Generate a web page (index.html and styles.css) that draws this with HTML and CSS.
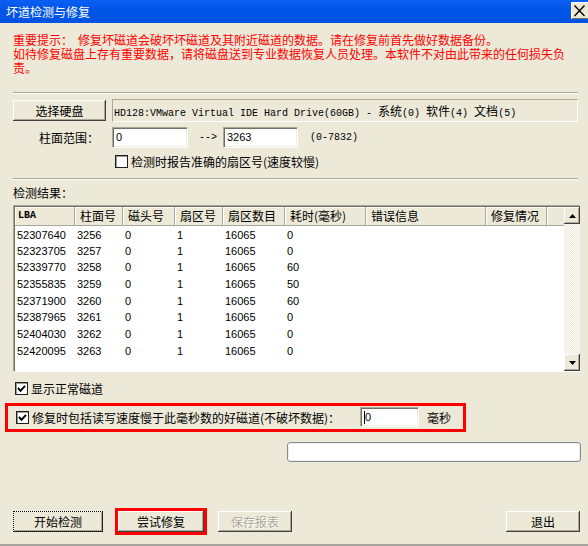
FILE: index.html
```html
<!DOCTYPE html>
<html lang="zh-CN">
<head>
<meta charset="utf-8">
<title>坏道检测与修复</title>
<link rel="stylesheet" href="styles.css">
</head>
<body>
<div class="win">
  <div class="titlebar">
    <span class="title">坏道检测与修复</span>
    <div class="close"><svg width="17" height="17" viewBox="0 0 17 17"><path d="M3.5 3.5 L13.5 14 M13.5 3.5 L3.5 14" stroke="#000" stroke-width="1.4" fill="none"/></svg></div>
  </div>
  <div class="content">
    <p class="warn">重要提示：<span class="sp"></span>修复坏磁道会破坏坏磁道及其附近磁道的数据。请在修复前首先做好数据备份。<br>如待修复磁盘上存有重要数据，请将磁盘送到专业数据恢复人员处理。本软件不对由此带来的任何损失负责。</p>
    <div class="sep sep1"></div>

    <div class="row r1">
      <button class="btn btn-disk">选择硬盘</button>
      <div class="diskfield">HD128:VMware Virtual IDE Hard Drive(60GB) - <span class="cj">系统</span>(0) <span class="cj">软件</span>(4) <span class="cj">文档</span>(5)</div>
    </div>

    <div class="row r2">
      <span class="lbl">柱面范围：</span>
      <div class="edit e1">0</div>
      <span class="arrow">--&gt;</span>
      <div class="edit e2">3263</div>
      <span class="range">(0-7832)</span>
    </div>

    <div class="row r3">
      <span class="chk"></span>
      <span class="chklbl">检测时报告准确的扇区号(速度较慢)</span>
    </div>

    <div class="sep sep2"></div>

    <div class="reslbl">检测结果：</div>

    <div class="list">
      <div class="lvmain">
        <div class="lvrow lvhead">
          <div class="hc hc-lba">LBA</div>
          <div class="hc">柱面号</div>
          <div class="hc">磁头号</div>
          <div class="hc">扇区号</div>
          <div class="hc">扇区数目</div>
          <div class="hc">耗时(毫秒)</div>
          <div class="hc">错误信息</div>
          <div class="hc">修复情况</div>
          <div class="hc hc-fill"></div>
        </div>
        <div class="lvrow"><div class="dc">52307640</div><div class="dc">3256</div><div class="dc">0</div><div class="dc">1</div><div class="dc">16065</div><div class="dc">0</div><div class="dc"></div><div class="dc"></div></div>
        <div class="lvrow"><div class="dc">52323705</div><div class="dc">3257</div><div class="dc">0</div><div class="dc">1</div><div class="dc">16065</div><div class="dc">0</div><div class="dc"></div><div class="dc"></div></div>
        <div class="lvrow"><div class="dc">52339770</div><div class="dc">3258</div><div class="dc">0</div><div class="dc">1</div><div class="dc">16065</div><div class="dc">60</div><div class="dc"></div><div class="dc"></div></div>
        <div class="lvrow"><div class="dc">52355835</div><div class="dc">3259</div><div class="dc">0</div><div class="dc">1</div><div class="dc">16065</div><div class="dc">50</div><div class="dc"></div><div class="dc"></div></div>
        <div class="lvrow"><div class="dc">52371900</div><div class="dc">3260</div><div class="dc">0</div><div class="dc">1</div><div class="dc">16065</div><div class="dc">60</div><div class="dc"></div><div class="dc"></div></div>
        <div class="lvrow"><div class="dc">52387965</div><div class="dc">3261</div><div class="dc">0</div><div class="dc">1</div><div class="dc">16065</div><div class="dc">0</div><div class="dc"></div><div class="dc"></div></div>
        <div class="lvrow"><div class="dc">52404030</div><div class="dc">3262</div><div class="dc">0</div><div class="dc">1</div><div class="dc">16065</div><div class="dc">0</div><div class="dc"></div><div class="dc"></div></div>
        <div class="lvrow"><div class="dc">52420095</div><div class="dc">3263</div><div class="dc">0</div><div class="dc">1</div><div class="dc">16065</div><div class="dc">0</div><div class="dc"></div><div class="dc"></div></div>
      </div>
      <div class="vscroll">
        <div class="sbtn"><svg width="7" height="4" viewBox="0 0 7 4"><path d="M3.5 0 L7 4 L0 4 Z" fill="#000"/></svg></div>
        <div class="strack"></div>
        <div class="sbtn"><svg width="7" height="4" viewBox="0 0 7 4"><path d="M0 0 L7 0 L3.5 4 Z" fill="#000"/></svg></div>
      </div>
    </div>

    <div class="row r4">
      <span class="chk checked"><svg width="11" height="11" viewBox="0 0 11 11"><path d="M2 5 L4.5 7.8 L9 2.8" stroke="#000" stroke-width="2" fill="none"/></svg></span>
      <span class="chklbl">显示正常磁道</span>
    </div>

    <div class="row redbox">
      <span class="chk checked"><svg width="11" height="11" viewBox="0 0 11 11"><path d="M2 5 L4.5 7.8 L9 2.8" stroke="#000" stroke-width="2" fill="none"/></svg></span>
      <span class="chklbl rlabel">修复时包括读写速度慢于此毫秒数的好磁道(不破坏数据)：</span>
      <div class="edit e3"><span class="caret"></span>0</div>
      <span class="unit">毫秒</span>
    </div>

    <div class="progress"></div>

    <div class="row btnrow">
      <button class="btn btn-start">开始检测</button>
      <div class="redwrap"><button class="btn btn-try">尝试修复</button></div>
      <button class="btn btn-save" disabled>保存报表</button>
      <button class="btn btn-exit">退出</button>
    </div>
  </div>
</div>
</body>
</html>
```

FILE: styles.css
```css
* { box-sizing: border-box; margin: 0; padding: 0; }
html, body { width: 588px; height: 546px; overflow: hidden; }
body {
  background: #ECE9D8;
  font-family: "Noto Sans CJK SC", "Liberation Sans", sans-serif;
  font-size: 12px;
  color: #000;
}
.win {
  width: 588px;
  height: 546px;
  display: flex;
  flex-direction: column;
  border-bottom: 2px solid #A5A39B;
}
.titlebar {
  height: 23px;
  flex: none;
  background: linear-gradient(#0860F2, #0155E6 40%, #0053E2);
  display: flex;
  justify-content: space-between;
  align-items: flex-start;
}
.title {
  color: #fff;
  line-height: 23px;
  padding-left: 6px;
}
.close {
  width: 17px;
  height: 17px;
  margin-top: 2px;
  background: #ECE9D8;
  box-shadow: inset 1px 1px 0 #fff, inset 0 -1px 0 #716F64;
}
.close svg { display: block; }

.content {
  flex: 1;
  display: flex;
  flex-direction: column;
  padding: 0 8px 0 13px;
}
.warn {
  margin-top: 11px;
  color: #f00;
  font-family: "Liberation Sans", "Noto Sans CJK SC", sans-serif;
  line-height: 14px;
}
.sp { display: inline-block; width: 5px; }
.sep {
  height: 2px;
  border-top: 1px solid #ACA899;
  border-bottom: 1px solid #fff;
  margin-right: 2px;
}
.sep1 { margin-top: 16px; }
.sep2 { margin-top: 9px; }

.row { display: flex; align-items: center; }

.btn {
  font-family: "Noto Sans CJK SC", sans-serif;
  font-size: 12px;
  color: #000;
  background: #ECE9D8;
  border: none;
  height: 21px;
  line-height: 19px;
  box-shadow: inset -1px -1px 0 #404040, inset 1px 1px 0 #fff, inset -2px -2px 0 #ACA899;
}

.r1 { margin-top: 5px; height: 23px; }
.btn-disk { width: 93px; }
.diskfield {
  flex: 1;
  height: 23px;
  margin-left: 6px;
  margin-right: 2px;
  border: 1px solid;
  border-color: #ACA899 #fff #fff #ACA899;
  padding-left: 1px;
  font-family: "Liberation Mono", monospace;
  font-size: 10px;
  line-height: 21px;
  white-space: nowrap;
}
.cj { font-family: "Noto Sans CJK SC", sans-serif; font-size: 12px; }

.r2 { margin-top: 5px; height: 21px; }
.lbl { padding-left: 26px; width: 99px; }
.edit {
  height: 21px;
  background: #fff;
  border: 1px solid;
  border-color: #ACA899 #fff #fff #ACA899;
  box-shadow: inset 1px 1px 0 #716F64, inset -1px -1px 0 #F1EFE2;
  font-family: "Liberation Sans", sans-serif;
  font-size: 11px;
  line-height: 19px;
  padding-left: 3px;
}
.e1 { width: 76px; margin-left: 0; }
.arrow {
  margin-left: 11px;
  width: 18px;
  font-family: "Liberation Mono", monospace;
  font-size: 10px;
}
.e2 { width: 75px; margin-left: 6px; }
.range {
  margin-left: 12px;
  font-family: "Liberation Mono", monospace;
  font-size: 10px;
}

.r3 { margin-top: 6px; height: 15px; padding-left: 102px; }
.chk {
  width: 13px;
  height: 13px;
  flex: none;
  background: #fff;
  border: 1px solid #1E1E1E;
  box-shadow: inset 1px 1px 0 #9A9A9A;
  display: flex;
  align-items: center;
  justify-content: center;
}
.chk svg { display: block; }
.chklbl { margin-left: 3px; line-height: 15px; white-space: nowrap; }

.reslbl { margin-top: 6px; line-height: 14px; }

.list {
  margin-top: 5px;
  height: 167px;
  display: flex;
  background: #fff;
  border-style: solid;
  border-width: 1px 0 1px 1px;
  border-color: #ACA899 #fff #fff #ACA899;
  box-shadow: inset 1px 1px 0 #716F64;
  padding: 1px 0 0 1px;
}
.lvmain { flex: 1; display: flex; flex-direction: column; }
.lvrow {
  display: grid;
  grid-template-columns: 60px 48px 52px 48px 62px 81px 120px 61px 1fr;
}
.lvhead { height: 19px; }
.hc {
  background: #ECE9D8;
  border-right: 1px solid #ACA899;
  border-bottom: 1px solid #ACA899;
  box-shadow: inset 1px 1px 0 #fff;
  padding-left: 5px;
  line-height: 18px;
  white-space: nowrap;
  overflow: hidden;
}
.hc-lba {
  font-family: "Liberation Mono", monospace;
  font-weight: bold;
  font-size: 10px;
  padding-left: 3px;
}
.hc-fill { border-right: none; }
.dc {
  height: 16.7px;
  line-height: 17px;
  padding-left: 2px;
  font-family: "Liberation Sans", sans-serif;
  font-size: 11px;
  white-space: nowrap;
}
.lvrow:nth-child(2) .dc { padding-top: 1px; }

.vscroll {
  width: 16px;
  flex: none;
  display: flex;
  flex-direction: column;
}
.sbtn {
  height: 17px;
  flex: none;
  background: #ECE9D8;
  box-shadow: inset -1px -1px 0 #404040, inset 1px 1px 0 #fff, inset -2px -2px 0 #ACA899;
  display: flex;
  align-items: center;
  justify-content: center;
}
.strack {
  flex: 1;
  background: repeating-conic-gradient(#ECE9D8 0% 25%, #fff 0% 50%) 0 0 / 2px 2px;
}

.r4 { margin-top: 9px; height: 14px; padding-left: 2px; }

.redbox {
  margin-top: 8px;
  margin-left: -8px;
  width: 461px;
  height: 29px;
  border: 3px solid #f00;
  padding-left: 8px;
}
.rlabel { width: 328px; flex: none; }
.e3 {
  width: 59px;
  height: 20px;
  margin-top: -1px;
  display: flex;
  align-items: center;
  padding-left: 3px;
}
.caret { width: 1px; height: 13px; background: #000; margin-right: 0; }
.unit { margin-left: 8px; }

.progress {
  margin-top: 10px;
  margin-left: 274px;
  height: 20px;
  background: #fff;
  border: 1px solid #8B8B8B;
  border-radius: 3px;
  box-shadow: inset 0 0 0 1px #EDEDED;
  margin-right: -1px;
}

.btnrow { margin-top: 46px; height: 27px; }
.btn-start {
  width: 90px;
  outline: 1px dotted #000;
  outline-offset: -1px;
}
.redwrap {
  margin-left: 12px;
  border: 3px solid #f00;
  display: flex;
}
.btn-try { width: 86px; }
.btn-save {
  width: 74px;
  margin-left: 11px;
  color: #ACA899;
  text-shadow: 1px 1px 0 #fff;
}
.btn-exit { width: 74px; margin-left: auto; }
```
